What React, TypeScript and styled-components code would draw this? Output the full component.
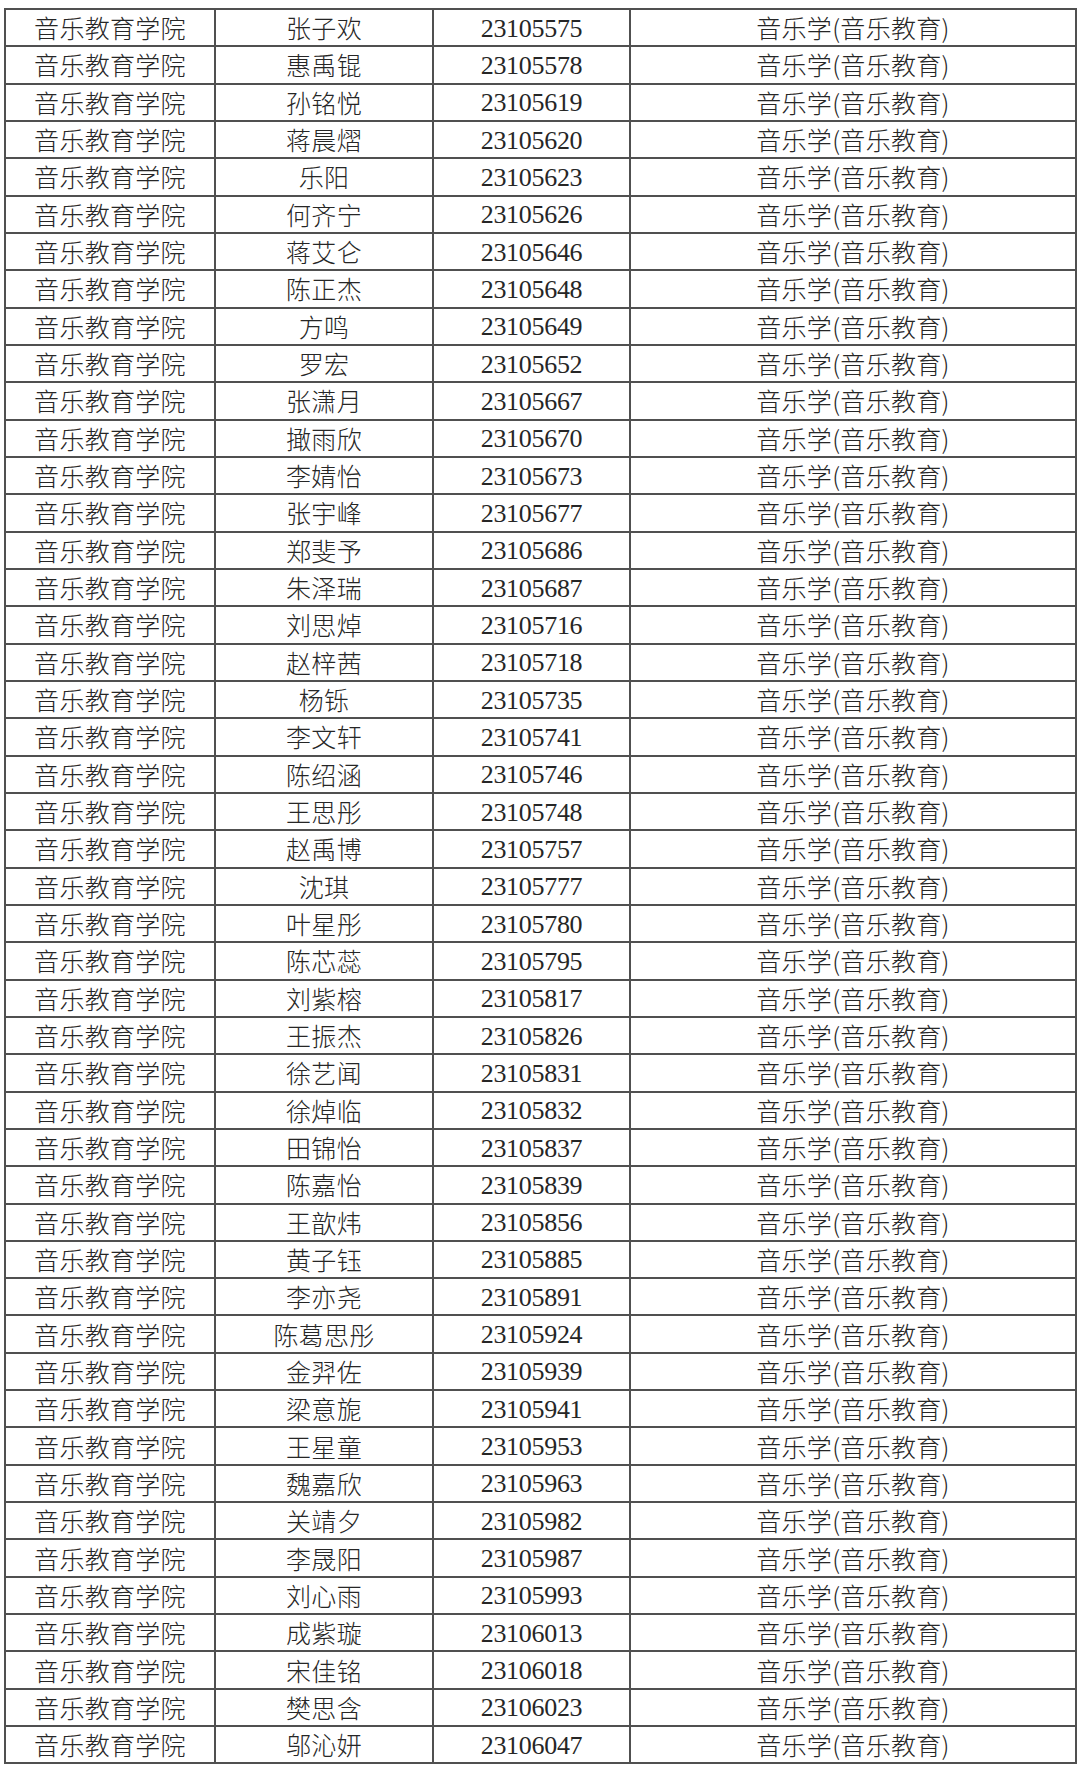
import styled, { createGlobalStyle } from "styled-components";

const GlobalStyle = createGlobalStyle`
  html, body {
    margin: 0;
    padding: 0;
    background: #ffffff;
  }
`;

const Page = styled.main`
  width: 1080px;
  min-height: 1772px;
  padding: 8px 0 0 4px;
  box-sizing: border-box;
  background: #ffffff;
`;

const Sheet = styled.table`
  border-collapse: collapse;
  table-layout: fixed;
  width: 1071px;
  border: 2px solid #4a4a4a;
  font-family: "Liberation Serif", "Noto Sans CJK SC", serif;
  color: #262626;
`;

const Col = styled.col<{ $w: number }>`
  width: ${({ $w }) => $w}px;
`;

const Row = styled.tr`
  height: 37.34px;
`;

const Cell = styled.td<{ $num?: boolean }>`
  border: 2px solid #505050;
  padding: ${({ $num }) => ($num ? "2px 0 0" : "0")};
  height: 37.34px;
  box-sizing: border-box;
  text-align: center;
  vertical-align: middle;
  font-size: ${({ $num }) => ($num ? "26px" : "25px")};
  line-height: 1;
  white-space: nowrap;
  font-family: ${({ $num }) =>
    $num
      ? `"Liberation Serif", serif`
      : `"Noto Sans CJK SC", "Liberation Serif", sans-serif`};
  font-weight: ${({ $num }) => ($num ? 400 : 300)};
  letter-spacing: ${({ $num }) => ($num ? "-0.3px" : "0.3px")};
`;

const columns = [210, 218, 197, 446];

const students: [string, string][] = [
  ["张子欢", "23105575"],
  ["惠禹锟", "23105578"],
  ["孙铭悦", "23105619"],
  ["蒋晨熠", "23105620"],
  ["乐阳", "23105623"],
  ["何齐宁", "23105626"],
  ["蒋艾仑", "23105646"],
  ["陈正杰", "23105648"],
  ["方鸣", "23105649"],
  ["罗宏", "23105652"],
  ["张潇月", "23105667"],
  ["撖雨欣", "23105670"],
  ["李婧怡", "23105673"],
  ["张宇峰", "23105677"],
  ["郑斐予", "23105686"],
  ["朱泽瑞", "23105687"],
  ["刘思焯", "23105716"],
  ["赵梓茜", "23105718"],
  ["杨铄", "23105735"],
  ["李文轩", "23105741"],
  ["陈绍涵", "23105746"],
  ["王思彤", "23105748"],
  ["赵禹博", "23105757"],
  ["沈琪", "23105777"],
  ["叶星彤", "23105780"],
  ["陈芯蕊", "23105795"],
  ["刘紫榕", "23105817"],
  ["王振杰", "23105826"],
  ["徐艺闻", "23105831"],
  ["徐焯临", "23105832"],
  ["田锦怡", "23105837"],
  ["陈嘉怡", "23105839"],
  ["王歆炜", "23105856"],
  ["黄子钰", "23105885"],
  ["李亦尧", "23105891"],
  ["陈葛思彤", "23105924"],
  ["金羿佐", "23105939"],
  ["梁意旎", "23105941"],
  ["王星童", "23105953"],
  ["魏嘉欣", "23105963"],
  ["关靖夕", "23105982"],
  ["李晟阳", "23105987"],
  ["刘心雨", "23105993"],
  ["成紫璇", "23106013"],
  ["宋佳铭", "23106018"],
  ["樊思含", "23106023"],
  ["邬沁妍", "23106047"],
];

const App = () => (
  <>
    <GlobalStyle />
    <Page>
      <Sheet>
        <colgroup>
          {columns.map((w, i) => (
            <Col key={i} $w={w} />
          ))}
        </colgroup>
        <tbody>
          {students.map(([name, id]) => (
            <Row key={id}>
              <Cell>音乐教育学院</Cell>
              <Cell>{name}</Cell>
              <Cell $num>{id}</Cell>
              <Cell>音乐学(音乐教育)</Cell>
            </Row>
          ))}
        </tbody>
      </Sheet>
    </Page>
  </>
);

export default App;
